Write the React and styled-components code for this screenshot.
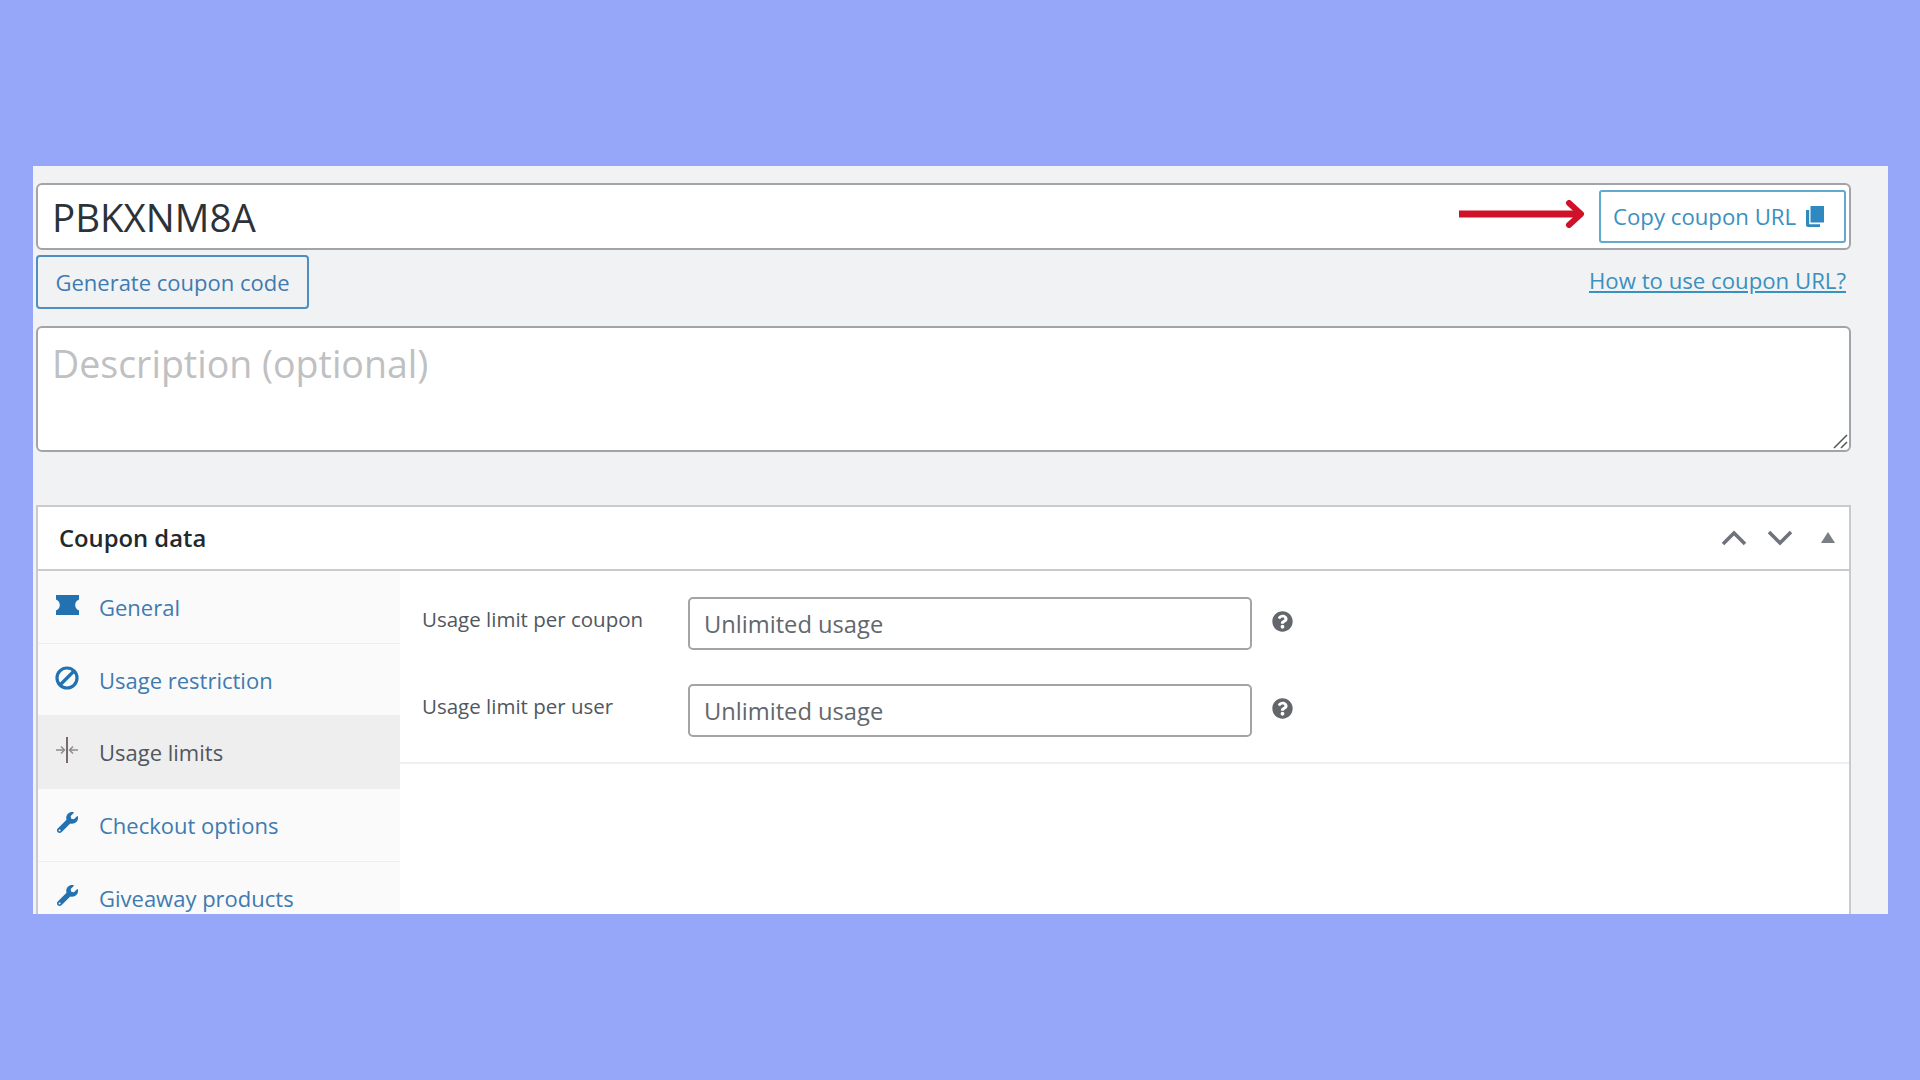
import React from 'react'
import styled, { createGlobalStyle } from 'styled-components'
import { FaWrench, FaQuestionCircle } from 'react-icons/fa'

const colors = {
  page: '#96a7fa',
  panel: '#f1f2f4',
  border: '#a2a4a7',
  soft: '#c9cacc',
  link: '#3f7bb0',
  sky: '#3a90bf',
  text: '#50575e',
}

const GlobalStyle = createGlobalStyle`
  html, body { margin: 0; padding: 0; }
  body {
    background: ${colors.page};
    font-family: "Open Sans", "Noto Sans", sans-serif;
  }
  * { box-sizing: border-box; }
`

const Page = styled.div`
  width: 1920px;
  height: 1080px;
  padding: 166px 32px 166px 33px;
  overflow: hidden;
`

const Panel = styled.div`
  height: 748px;
  padding: 17px 37px 0 3px;
  background: ${colors.panel};
  overflow: hidden;
`

const CodeRow = styled.div`
  display: flex;
  align-items: center;
  height: 67px;
  padding: 0 3px 0 14px;
  background: #fff;
  border: 2px solid ${colors.border};
  border-radius: 6px;
`

const CodeText = styled.div`
  flex: 1;
  font-size: 38.5px;
  color: #2c3338;
`

const Arrow = styled.svg`
  width: 127px;
  height: 28px;
  margin: 0 13px 6px 0;
`

const CopyButton = styled.button`
  display: flex;
  align-items: center;
  justify-content: space-between;
  width: 247px;
  height: 53px;
  padding: 0 20px 0 12px;
  background: #fff;
  border: 2px solid #62aacb;
  border-radius: 3px;
  font: inherit;
  font-size: 22.2px;
  color: ${colors.sky};
`

const ActionRow = styled.div`
  display: flex;
  align-items: center;
  justify-content: space-between;
  margin-top: 5px;
  padding-right: 5px;
`

const GenerateButton = styled.button`
  width: 273px;
  height: 54px;
  padding: 0;
  background: ${colors.panel};
  border: 2px solid #4d8fc0;
  border-radius: 4px;
  font: inherit;
  font-size: 22px;
  color: ${colors.link};
`

const HelpLink = styled.a`
  margin-bottom: 3px;
  font-size: 22.2px;
  color: ${colors.sky};
  text-decoration: underline;
`

const Description = styled.div`
  position: relative;
  height: 126px;
  margin-top: 17px;
  padding: 10px 14px;
  background: #fff;
  border: 2px solid ${colors.border};
  border-radius: 6px;
  font-size: 37.5px;
  color: #bfc0c2;
`

const ResizeGrip = styled.svg`
  position: absolute;
  right: 1px;
  bottom: 1px;
  width: 16px;
  height: 16px;
`

const Box = styled.section`
  height: 500px;
  margin-top: 53px;
  background: #fff;
  border: 2px solid ${colors.soft};
  border-bottom: 0;
`

const BoxHeader = styled.header`
  display: flex;
  align-items: center;
  justify-content: space-between;
  height: 64px;
  padding: 0 14px 0 21px;
  border-bottom: 2px solid ${colors.soft};
`

const BoxTitle = styled.h2`
  margin: 0;
  font-size: 23.8px;
  font-weight: 600;
  color: #23282d;
`

const HeaderIcons = styled.div`
  display: flex;
  align-items: center;
  gap: 18px;
`

const HeaderIcon = styled.svg`
  width: 28px;
  height: 20px;
  fill: none;
  stroke: #6f747a;
  stroke-width: 3.6;
`

const Caret = styled.svg`
  width: 14px;
  height: 11px;
  margin: 0 0 2px 9px;
  fill: #7b7f84;
`

const BoxBody = styled.div`
  display: flex;
  height: 440px;
`

const Tabs = styled.nav`
  flex: 0 0 362px;
  background: #fafafa;
`

const Tab = styled.a`
  display: flex;
  align-items: center;
  height: 72.7px;
  padding-left: 16px;
  border-bottom: 1px solid #eeeeee;
  background: ${({ $active }) => ($active ? '#eeeeee' : 'transparent')};
  font-size: 22px;
  color: ${({ $active }) => ($active ? colors.text : colors.link)};
`

const TabIcon = styled.span`
  display: flex;
  justify-content: center;
  flex: 0 0 26px;
  margin-right: 19px;
  margin-top: -4px;
  font-size: 21px;
  color: #2271b1;
`

const FieldsPane = styled.div`
  flex: 1;
`

const Fields = styled.div`
  display: flex;
  flex-direction: column;
  gap: 34px;
  height: 193px;
  padding: 26px 0 0 22px;
  border-bottom: 2px solid #f0f0f1;
`

const FieldRow = styled.div`
  display: flex;
  align-items: center;
`

const FieldLabel = styled.label`
  flex: 0 0 266px;
  margin-top: -10px;
  font-size: 20.5px;
  color: ${colors.text};
`

const FieldInput = styled.div`
  display: flex;
  align-items: center;
  width: 564px;
  height: 53px;
  padding-left: 14px;
  background: #fff;
  border: 2px solid ${colors.border};
  border-radius: 5px;
  font-size: 23.7px;
  color: #62676c;
`

const HelpIcon = styled(FaQuestionCircle)`
  margin-left: 20px;
  margin-top: -4px;
  font-size: 21px;
  color: #63666a;
`

const TicketIcon = () => (
  <svg width="25" height="20" viewBox="0 0 25 20" fill="currentColor">
    <path d="M1 0h23v4.500c-2.600 1.200-3.800 3.200-3.800 5.500s1.200 4.300 3.800 5.500V20H1v-4.500C3.600 14.300 4.800 12.300 4.800 10S3.600 5.700 1 4.500z" />
  </svg>
)

const BanIcon = () => (
  <svg width="24" height="24" viewBox="0 0 24 24" fill="none" stroke="currentColor" strokeWidth="3.200">
    <circle cx="12" cy="12" r="10" />
    <path d="M5.500 18.500 18.500 5.500" />
  </svg>
)

const LimitsIcon = () => (
  <svg width="24" height="28" viewBox="0 0 24 28" fill="none" stroke="#8b8d90" strokeWidth="1.500">
    <path d="M12 1v26" stroke="#77696c" strokeWidth="2" />
    <path d="M1 14h8M6 10.500 9.500 14 6 17.500M23 14h-8M18 10.500 14.500 14 18 17.500" />
  </svg>
)

const CopyIcon = () => (
  <svg width="18" height="21" viewBox="0 0 18 21" fill="#2f88c0">
    <path d="M4.500 0H18v16.500H4.500z" />
    <path d="M0 4h3.200v14.200H14V21H2a2 2 0 0 1-2-2z" />
  </svg>
)

const tabs = [
  { label: 'General', icon: <TicketIcon /> },
  { label: 'Usage restriction', icon: <BanIcon /> },
  { label: 'Usage limits', icon: <LimitsIcon />, active: true },
  { label: 'Checkout options', icon: <FaWrench /> },
  { label: 'Giveaway products', icon: <FaWrench /> },
]

const fields = ['Usage limit per coupon', 'Usage limit per user']

export default function App() {
  return (
    <Page>
      <GlobalStyle />
      <Panel>
        <CodeRow>
          <CodeText>PBKXNM8A</CodeText>
          <Arrow viewBox="0 0 127 28" fill="none" stroke="#cf1229">
            <path d="M0 14h120" strokeWidth="7" />
            <path d="M110 3l12 11-12 11" strokeWidth="6" strokeLinecap="round" strokeLinejoin="round" />
          </Arrow>
          <CopyButton>
            Copy coupon URL
            <CopyIcon />
          </CopyButton>
        </CodeRow>
        <ActionRow>
          <GenerateButton>Generate coupon code</GenerateButton>
          <HelpLink>How to use coupon URL?</HelpLink>
        </ActionRow>
        <Description>
          Description (optional)
          <ResizeGrip viewBox="0 0 16 16" stroke="#555" strokeWidth="1.500" fill="none">
            <path d="M2 15 15 2M9 15l6-6" />
          </ResizeGrip>
        </Description>
        <Box>
          <BoxHeader>
            <BoxTitle>Coupon data</BoxTitle>
            <HeaderIcons>
              <HeaderIcon viewBox="0 0 28 20">
                <path d="M3 16 14 5l11 11" />
              </HeaderIcon>
              <HeaderIcon viewBox="0 0 28 20">
                <path d="M3 4l11 11L25 4" />
              </HeaderIcon>
              <Caret viewBox="0 0 14 11">
                <path d="M7 0l7 11H0z" />
              </Caret>
            </HeaderIcons>
          </BoxHeader>
          <BoxBody>
            <Tabs>
              {tabs.map(({ label, icon, active }) => (
                <Tab key={label} $active={active}>
                  <TabIcon>{icon}</TabIcon>
                  {label}
                </Tab>
              ))}
            </Tabs>
            <FieldsPane>
              <Fields>
                {fields.map((label) => (
                  <FieldRow key={label}>
                    <FieldLabel>{label}</FieldLabel>
                    <FieldInput>Unlimited usage</FieldInput>
                    <HelpIcon />
                  </FieldRow>
                ))}
              </Fields>
            </FieldsPane>
          </BoxBody>
        </Box>
      </Panel>
    </Page>
  )
}
